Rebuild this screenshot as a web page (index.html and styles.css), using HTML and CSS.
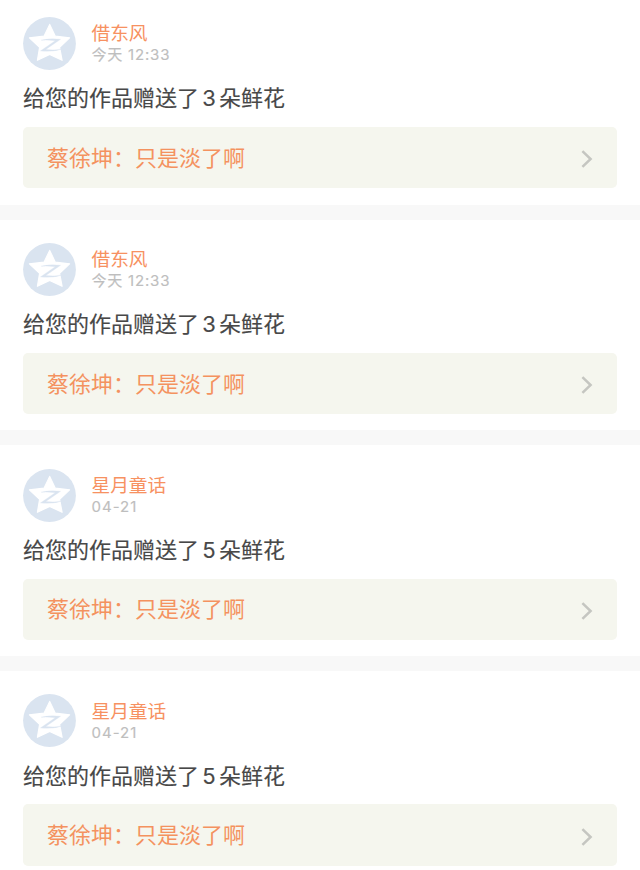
FILE: index.html
```html
<!DOCTYPE html>
<html lang="zh-CN">
<head>
<meta charset="utf-8">
<title>消息</title>
<link rel="stylesheet" href="styles.css">
</head>
<body>
<svg class="defs" width="0" height="0" aria-hidden="true">
  <symbol id="avatar" viewBox="0 0 53 53">
    <circle cx="26.5" cy="26.5" r="26.4" fill="#dae4f0"/>
    <path d="M26.7 7.4 32.3 19.2 46.6 20.8 36.6 30.4 39.1 43.3 26.7 37.4 14.4 43.3 16.6 30.4 6.4 20.8 21 19.2Z" fill="#fff" stroke="#fff" stroke-width="1.2" stroke-linejoin="round"/>
    <path d="M18 23.2Q27 21 37.6 22.3L22.8 32.5Q32 33.6 41 31.7Q30 35.4 17.4 33.9L32.2 23.8Q24 22.6 18 23.2Z" fill="#dae4f0" stroke="#dae4f0" stroke-width="0.3"/>
  </symbol>
  <symbol id="chevron" viewBox="0 0 12 18">
    <path d="M1.4 1.2 9.6 9 1.4 16.8" fill="none" stroke="#c5c6c1" stroke-width="2.5"/>
  </symbol>
</svg>
<main class="feed">
  <article class="item">
    <header class="user">
      <svg class="avatar"><use href="#avatar"/></svg>
      <div class="meta"><div class="name">借东风</div><div class="time">今天 12:33</div></div>
    </header>
    <p class="message">给您的作品赠送了<span class="count">3</span>朵鲜花</p>
    <div class="work"><span>蔡徐坤：只是淡了啊</span><svg class="chevron"><use href="#chevron"/></svg></div>
  </article>
  <article class="item">
    <header class="user">
      <svg class="avatar"><use href="#avatar"/></svg>
      <div class="meta"><div class="name">借东风</div><div class="time">今天 12:33</div></div>
    </header>
    <p class="message">给您的作品赠送了<span class="count">3</span>朵鲜花</p>
    <div class="work"><span>蔡徐坤：只是淡了啊</span><svg class="chevron"><use href="#chevron"/></svg></div>
  </article>
  <article class="item">
    <header class="user">
      <svg class="avatar"><use href="#avatar"/></svg>
      <div class="meta"><div class="name">星月童话</div><div class="time date">04-21</div></div>
    </header>
    <p class="message">给您的作品赠送了<span class="count">5</span>朵鲜花</p>
    <div class="work"><span>蔡徐坤：只是淡了啊</span><svg class="chevron"><use href="#chevron"/></svg></div>
  </article>
  <article class="item">
    <header class="user">
      <svg class="avatar"><use href="#avatar"/></svg>
      <div class="meta"><div class="name">星月童话</div><div class="time date">04-21</div></div>
    </header>
    <p class="message">给您的作品赠送了<span class="count">5</span>朵鲜花</p>
    <div class="work"><span>蔡徐坤：只是淡了啊</span><svg class="chevron"><use href="#chevron"/></svg></div>
  </article>
</main>
</body>
</html>
```
FILE: styles.css
```css
* { box-sizing: border-box; }
body {
  margin: 0;
  background: #fff;
  font-family: Inter, "Noto Sans CJK SC", sans-serif;
}
.defs { display: none; }
.feed { height: 870px; overflow: hidden; }
.item {
  height: 225.8px;
  padding: 23.2px 23px 0;
  border-bottom: 15.4px solid #f8f8f8;
}
.item:first-child { height: 219.6px; padding-top: 16.8px; }
.item:last-child { border-bottom: 0; }
.user { display: flex; height: 53px; }
.avatar { display: block; width: 53px; height: 53px; flex: none; }
.meta { margin-left: 15.5px; padding-top: 6.3px; }
.name {
  color: #f79161;
  font-size: 18.7px;
  line-height: 21px;
  white-space: nowrap;
}
.time {
  color: #bebebe;
  font-size: 15px;
  line-height: 21px;
  letter-spacing: 0.8px;
  white-space: nowrap;
  -webkit-text-stroke: 0.15px #bebebe;
}
.date { letter-spacing: 1px; }
.message {
  margin: 12.4px 0 0;
  height: 32px;
  color: #484848;
  font-size: 22px;
  line-height: 32px;
  white-space: nowrap;
  -webkit-text-stroke: 0.15px #484848;
}
.count { display: inline-block; width: 20px; text-align: center; }
.work {
  display: flex;
  align-items: center;
  justify-content: space-between;
  height: 61.6px;
  margin-top: 12.6px;
  padding: 0 24px;
  border-radius: 5px;
  background: #f5f6ee;
  color: #f4925f;
  font-size: 22px;
  line-height: 32px;
}
.chevron { display: block; width: 12px; height: 18px; margin-top: 3px; }
```
